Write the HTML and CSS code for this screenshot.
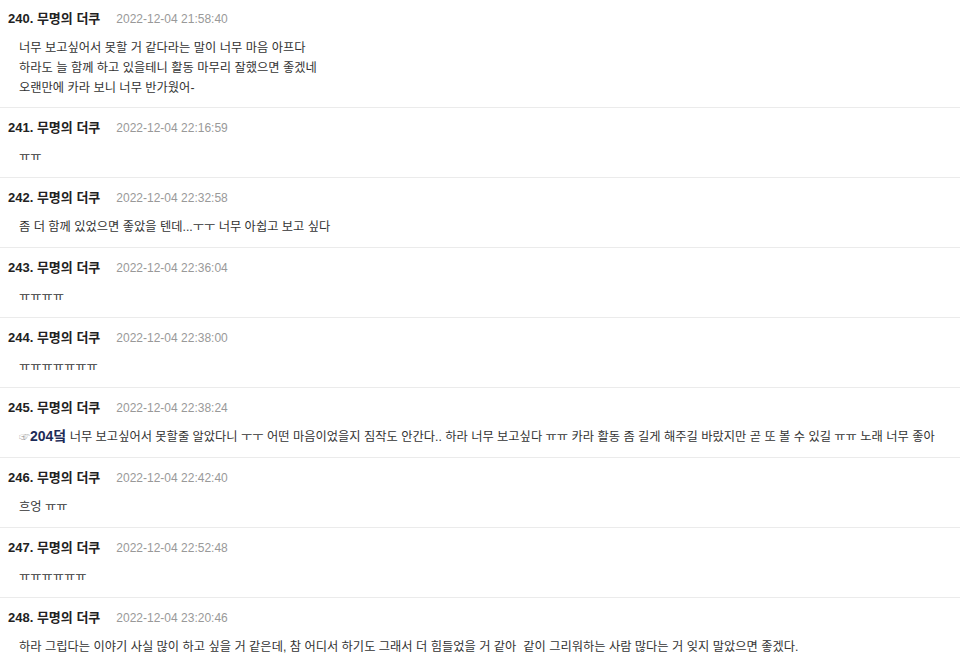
FILE: index.html
```html
<!DOCTYPE html>
<html lang="ko">
<head>
<meta charset="utf-8">
<link rel="stylesheet" href="styles.css">
</head>
<body>
<ul class="comments">
  <li class="comment">
    <div class="meta"><span class="name">240. 무명의 더쿠</span><span class="date">2022-12-04 21:58:40</span></div>
    <div class="body">너무 보고싶어서 못할 거 같다라는 말이 너무 마음 아프다<br>하라도 늘 함께 하고 있을테니 활동 마무리 잘했으면 좋겠네<br>오랜만에 카라 보니 너무 반가웠어-</div>
  </li>
  <li class="comment">
    <div class="meta"><span class="name">241. 무명의 더쿠</span><span class="date">2022-12-04 22:16:59</span></div>
    <div class="body">ㅠㅠ</div>
  </li>
  <li class="comment">
    <div class="meta"><span class="name">242. 무명의 더쿠</span><span class="date">2022-12-04 22:32:58</span></div>
    <div class="body">좀 더 함께 있었으면 좋았을 텐데...ㅜㅜ 너무 아쉽고 보고 싶다</div>
  </li>
  <li class="comment">
    <div class="meta"><span class="name">243. 무명의 더쿠</span><span class="date">2022-12-04 22:36:04</span></div>
    <div class="body">ㅠㅠㅠㅠ</div>
  </li>
  <li class="comment">
    <div class="meta"><span class="name">244. 무명의 더쿠</span><span class="date">2022-12-04 22:38:00</span></div>
    <div class="body">ㅠㅠㅠㅠㅠㅠㅠ</div>
  </li>
  <li class="comment">
    <div class="meta"><span class="name">245. 무명의 더쿠</span><span class="date">2022-12-04 22:38:24</span></div>
    <div class="body"><span class="hand">☞</span><a class="ref">204덬</a> 너무 보고싶어서 못할줄 알았다니 ㅜㅜ 어떤 마음이었을지 짐작도 안간다.. 하라 너무 보고싶다 ㅠㅠ 카라 활동 좀 길게 해주길 바랐지만 곧 또 볼 수 있길 ㅠㅠ 노래 너무 좋아</div>
  </li>
  <li class="comment">
    <div class="meta"><span class="name">246. 무명의 더쿠</span><span class="date">2022-12-04 22:42:40</span></div>
    <div class="body">흐엉 ㅠㅠ</div>
  </li>
  <li class="comment">
    <div class="meta"><span class="name">247. 무명의 더쿠</span><span class="date">2022-12-04 22:52:48</span></div>
    <div class="body">ㅠㅠㅠㅠㅠㅠ</div>
  </li>
  <li class="comment">
    <div class="meta"><span class="name">248. 무명의 더쿠</span><span class="date">2022-12-04 23:20:46</span></div>
    <div class="body">하라 그립다는 이야기 사실 많이 하고 싶을 거 같은데, 참 어디서 하기도 그래서 더 힘들었을 거 같아&nbsp; 같이 그리워하는 사람 많다는 거 잊지 말았으면 좋겠다.</div>
  </li>
</ul>
</body>
</html>
```
FILE: styles.css
```css
html, body {
  margin: 0;
  padding: 0;
  background: #ffffff;
}
body {
  font-family: "Liberation Sans", "Noto Sans CJK KR", sans-serif;
  color: #333333;
  overflow: hidden;
}
.comments {
  list-style: none;
  margin: -1px 0 0 0;
  padding: 0;
}
.comment {
  padding: 10px 8px 10px 8px;
  border-bottom: 1px solid #ebebeb;
}
.comment:first-child {
  padding-bottom: 9px;
}
.meta {
  display: flex;
  align-items: baseline;
  gap: 16px;
  line-height: 20px;
}
.name {
  font-size: 13px;
  font-weight: bold;
  color: #222222;
}
.date {
  font-size: 12px;
  color: #999999;
}
.body {
  margin-top: 9px;
  padding-left: 11px;
  font-size: 12.25px;
  line-height: 20px;
  height: auto;
  color: #333333;
  white-space: nowrap;
}
.hand {
  font-size: 11px;
  line-height: 1;
  color: #aaaaaa;
}
.ref {
  font-weight: bold;
  color: #1d2b57;
  font-size: 14px;
  line-height: 1;
}
```
